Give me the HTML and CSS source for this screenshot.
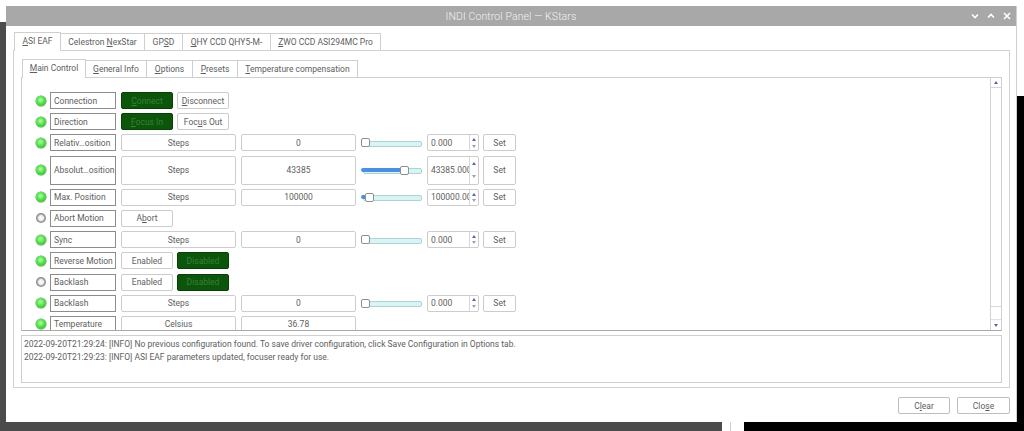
FILE: index.html
```html
<!DOCTYPE html>
<html>
<head>
<meta charset="utf-8">
<link rel="stylesheet" href="styles.css">
</head>
<body>
<div class="desk-left"></div>
<div class="desk-bottom"></div>
<div class="desk-gap"></div>
<div class="desk-right"></div>
<div class="desk-br"></div>

<div class="window">
  <div class="titlebar">
    <span></span>
    <span class="title">INDI Control Panel — KStars</span>
    <div class="wctl">
      <svg width="8" height="6" viewBox="0 0 8 6"><polyline points="1,1.5 4,4.5 7,1.5" fill="none" stroke="#fff" stroke-width="1.6"/></svg>
      <svg width="8" height="6" viewBox="0 0 8 6"><polyline points="1,4.5 4,1.5 7,4.5" fill="none" stroke="#fff" stroke-width="1.6"/></svg>
      <svg width="8" height="8" viewBox="0 0 8 8"><path d="M1 1L7 7M7 1L1 7" stroke="#fff" stroke-width="1.6"/></svg>
    </div>
  </div>

  <div class="wbody">
    <div class="tabs outer-tabs">
      <div class="tab sel"><u>A</u>SI EAF</div>
      <div class="tab">Celestron <u>N</u>exStar</div>
      <div class="tab">GP<u>S</u>D</div>
      <div class="tab"><u>Q</u>HY CCD QHY5-M-</div>
      <div class="tab"><u>Z</u>WO CCD ASI294MC Pro</div>
    </div>
    <div class="outer-pane">
      <div class="tabs inner-tabs">
        <div class="tab sel"><u>M</u>ain Control</div>
        <div class="tab"><u>G</u>eneral Info</div>
        <div class="tab"><u>O</u>ptions</div>
        <div class="tab"><u>P</u>resets</div>
        <div class="tab"><u>T</u>emperature compensation</div>
      </div>
      <div class="inner-pane">
        <div class="rows">
          <div class="row">
            <span class="led on"></span><span class="lbl">Connection</span>
            <span class="btn green"><u>C</u>onnect</span><span class="btn"><u>D</u>isconnect</span>
          </div>
          <div class="row">
            <span class="led on"></span><span class="lbl">Direction</span>
            <span class="btn green"><u>F</u>ocus In</span><span class="btn">Foc<u>u</u>s Out</span>
          </div>
          <div class="row">
            <span class="led on"></span><span class="lbl">Relativ…osition</span>
            <span class="ro">Steps</span><span class="ro">0</span>
            <span class="slider"><span class="fill" style="width:0px"></span><span class="handle" style="left:0px"></span></span>
            <span class="spin"><span class="sv">0.000</span><span class="arr"><i class="up"></i><i class="dn"></i></span></span>
            <span class="btn set">Set</span>
          </div>
          <div class="row tall">
            <span class="led on"></span><span class="lbl">Absolut…osition</span>
            <span class="ro">Steps</span><span class="ro">43385</span>
            <span class="slider"><span class="fill" style="width:41px"></span><span class="handle" style="left:39px"></span></span>
            <span class="spin"><span class="sv">43385.000</span><span class="arr"><i class="up"></i><i class="dn"></i></span></span>
            <span class="btn set">Set</span>
          </div>
          <div class="row">
            <span class="led on"></span><span class="lbl">Max. Position</span>
            <span class="ro">Steps</span><span class="ro">100000</span>
            <span class="slider"><span class="fill" style="width:6px"></span><span class="handle" style="left:4px"></span></span>
            <span class="spin"><span class="sv">100000.000</span><span class="arr"><i class="up"></i><i class="dn"></i></span></span>
            <span class="btn set">Set</span>
          </div>
          <div class="row">
            <span class="led off"></span><span class="lbl">Abort Motion</span>
            <span class="btn">A<u>b</u>ort</span>
          </div>
          <div class="row">
            <span class="led on"></span><span class="lbl">Sync</span>
            <span class="ro">Steps</span><span class="ro">0</span>
            <span class="slider"><span class="fill" style="width:0px"></span><span class="handle" style="left:0px"></span></span>
            <span class="spin"><span class="sv">0.000</span><span class="arr"><i class="up"></i><i class="dn"></i></span></span>
            <span class="btn set">Set</span>
          </div>
          <div class="row">
            <span class="led on"></span><span class="lbl">Reverse Motion</span>
            <span class="btn">Enabled</span><span class="btn green">Disabled</span>
          </div>
          <div class="row">
            <span class="led off"></span><span class="lbl">Backlash</span>
            <span class="btn">Enabled</span><span class="btn green">Disabled</span>
          </div>
          <div class="row">
            <span class="led on"></span><span class="lbl">Backlash</span>
            <span class="ro">Steps</span><span class="ro">0</span>
            <span class="slider"><span class="fill" style="width:0px"></span><span class="handle" style="left:0px"></span></span>
            <span class="spin"><span class="sv">0.000</span><span class="arr"><i class="up"></i><i class="dn"></i></span></span>
            <span class="btn set">Set</span>
          </div>
          <div class="row">
            <span class="led on"></span><span class="lbl">Temperature</span>
            <span class="ro">Celsius</span><span class="ro">36.78</span>
          </div>
        </div>
        <div class="vscroll">
          <div class="sb-btn"><i class="up"></i></div>
          <div class="sb-thumb"></div>
          <div class="sb-track"></div>
          <div class="sb-btn"><i class="dn"></i></div>
        </div>
      </div>
      <div class="log">
        <div>2022-09-20T21:29:24: [INFO] No previous configuration found. To save driver configuration, click Save Configuration in Options tab.</div>
        <div>2022-09-20T21:29:23: [INFO] ASI EAF parameters updated, focuser ready for use.</div>
      </div>
    </div>
    <div class="footer">
      <span class="btn fbtn">C<u>l</u>ear</span>
      <span class="btn fbtn close">Clo<u>s</u>e</span>
    </div>
  </div>
</div>
</body>
</html>
```
FILE: styles.css
```css
* { box-sizing: border-box; }
html, body { margin: 0; padding: 0; }
body {
  width: 1024px; height: 431px; overflow: hidden; position: relative;
  background: #fff;
  font-family: Roboto, "Noto Sans", sans-serif;
  font-size: 8.5px; color: #5e5e5e;
}
u { text-decoration: underline; text-underline-offset: 1px; }

/* desktop behind the window */
.desk-left { position: absolute; left: 0; top: 22px; width: 8px; height: 409px; background: #4b4b4b; }
.desk-bottom { position: absolute; left: 0; top: 420px; width: 722px; height: 11px; background: #4b4b4b; }
.desk-gap { position: absolute; left: 730px; top: 420px; width: 1px; height: 11px; background: #cfcfcf; }
.desk-right { position: absolute; left: 1017px; top: 96px; width: 7px; height: 335px; background: #000; }
.desk-br { position: absolute; left: 744px; top: 420px; width: 280px; height: 11px; background: #000; }

.window {
  position: absolute; left: 6px; top: 6px; width: 1011px; height: 416px;
  background: #fff; display: flex; flex-direction: column;
  border-right: 1px solid #cfcfcf;
}
.titlebar {
  height: 20px; background: #a8a8a8; flex: none;
  display: grid; grid-template-columns: 1fr auto 1fr; align-items: center;
}
.title { color: #f2f2f2; font-size: 10.5px; font-weight: 300; letter-spacing: 0.1px; }
.wctl { justify-self: end; display: flex; align-items: center; gap: 8px; padding-right: 5px; }
.wctl svg { display: block; }

.wbody { flex: 1; display: flex; flex-direction: column; padding: 7px 6px 0 7px; }

.tabs { display: flex; align-items: flex-end; position: relative; z-index: 1; }
.tab {
  border: 1px solid #cfcfcf; border-bottom: none; background: #fff;
  padding: 0 6px; height: 17px; line-height: 16px; margin-right: -1px; white-space: nowrap;
  text-align: center;
}
.tab.sel { height: 18px; line-height: 17px; }
.outer-tabs { margin-left: 1px; height: 17px; }
.outer-tabs .tab.sel { height: 19px; margin-bottom: -1px; }
.outer-tabs .tab:nth-child(1) { width: 47px; }
.outer-tabs .tab:nth-child(2) { width: 85px; }
.outer-tabs .tab:nth-child(3) { width: 39px; }
.outer-tabs .tab:nth-child(4) { width: 89px; }
.outer-tabs .tab:nth-child(5) { width: 111px; }

.outer-pane {
  border: 1px solid #d2d2d2; height: 338px; flex: none;
  padding: 8px 7px 4px 7px; display: flex; flex-direction: column;
}
.inner-tabs { margin-left: 1px; height: 18px; }
.inner-tabs .tab { height: 17px; }
.inner-tabs .tab.sel { height: 19px; margin-bottom: -1px; }
.inner-tabs .tab:nth-child(1) { width: 64px; }
.inner-tabs .tab:nth-child(2) { width: 62px; }
.inner-tabs .tab:nth-child(3) { width: 47px; }
.inner-tabs .tab:nth-child(4) { width: 46px; }
.inner-tabs .tab:nth-child(5) { width: 121px; }

.inner-pane {
  height: 254px; flex: none; display: flex; overflow: hidden;
  border: 1px solid #cfcfcf; border-bottom: 1px solid #a9a9a9;
}
.rows {
  flex: 1; display: flex; flex-direction: column; gap: 4.2px;
  padding: 14px 0 0 14px; overflow: hidden;
}
.row { display: flex; align-items: center; height: 17px; flex: none; }
.row.tall { height: 29px; align-items: stretch; }
.row.tall .led, .row.tall .slider { align-self: center; }
.row > * + * { margin-left: 5px; }
.row > .lbl { margin-left: 4px; }
.row > .btn + .btn { margin-left: 4px; }
.row > .spin + .set { margin-left: 4px; }

.led {
  width: 10px; height: 10px; border-radius: 50%; flex: none;
}
.led.on {
  background: radial-gradient(circle at 45% 40%, #b6ffb0 0%, #53e24a 45%, #23a41c 100%);
  box-shadow: 0 0 0 0.5px #3c9a36;
}
.led.off {
  background: radial-gradient(circle at 50% 50%, #fff 0%, #eee 35%, #8a8a8a 60%, #a4a4a4 100%);
}
.lbl {
  width: 66px; height: 100%; flex: none; border: 1px solid #8c8c8c;
  display: flex; align-items: center; padding-left: 3px; white-space: nowrap; overflow: hidden;
}
.ro {
  width: 115px; height: 100%; flex: none; border: 1px solid #cdcdcd; border-radius: 2px;
  display: flex; align-items: center; justify-content: center;
}
.btn {
  width: 52px; height: 100%; flex: none; border: 1px solid #cbcbcb; border-radius: 2px;
  display: flex; align-items: center; justify-content: center; background: #fff; white-space: nowrap;
}
.btn.green { background: #0b560b; border-color: #0a3f0a; color: #3a7f3a; }
.btn.set { width: 33px; }
.slider {
  width: 61px; height: 9px; flex: none; position: relative;
}
.slider::before {
  content: ""; position: absolute; left: 2px; right: 0; top: 2.5px; height: 4px;
  background: #dcf3f3; border: 1px solid #a8d6d6; border-radius: 2px;
}
.fill {
  position: absolute; left: 0; top: 2.5px; height: 4px; background: #4b8fe2; border-radius: 2px;
}
.handle {
  position: absolute; top: 0; width: 9px; height: 9px; background: #fff;
  border: 1px solid #8f8f8f; border-radius: 2px;
}
.spin {
  width: 52px; height: 100%; flex: none; border: 1px solid #cdcdcd; border-radius: 2px;
  display: flex; overflow: hidden;
}
.sv { flex: 1; display: flex; align-items: center; padding-left: 3px; overflow: hidden; white-space: nowrap; }
.arr {
  width: 9px; flex: none; border-left: 1px solid #d8d8d8;
  display: flex; flex-direction: column; align-items: center; justify-content: space-around; padding: 1px 0;
}
i.up, i.dn { display: block; width: 0; height: 0; border-left: 2.5px solid transparent; border-right: 2.5px solid transparent; }
i.up { border-bottom: 3px solid #5866a8; }
i.dn { border-top: 3px solid #9aa0c0; }

.vscroll {
  width: 11px; flex: none; border-left: 1px solid #d2d2d2; display: flex; flex-direction: column;
}
.sb-btn { height: 10px; flex: none; display: flex; align-items: center; justify-content: center; }
.sb-btn:first-child { border-bottom: 1px solid #d8d8d8; }
.sb-btn .dn { border-top-color: #5866a8; }
.sb-thumb { height: 219px; flex: none; border-bottom: 1px solid #d8d8d8; }
.sb-track { flex: 1; border-bottom: 1px solid #e2e2e2; }

.log {
  margin-top: 4px; height: 48px; flex: none; border: 1px solid #cfcfcf;
  padding: 2px 2px; line-height: 13px; white-space: nowrap; overflow: hidden;
}

.footer { display: flex; justify-content: flex-end; gap: 7px; margin-top: 9px; padding-right: 0; }
.fbtn { width: 52px; height: 17px; border-color: #bdbdbd; }
.fbtn.close { width: 53px; }
```
